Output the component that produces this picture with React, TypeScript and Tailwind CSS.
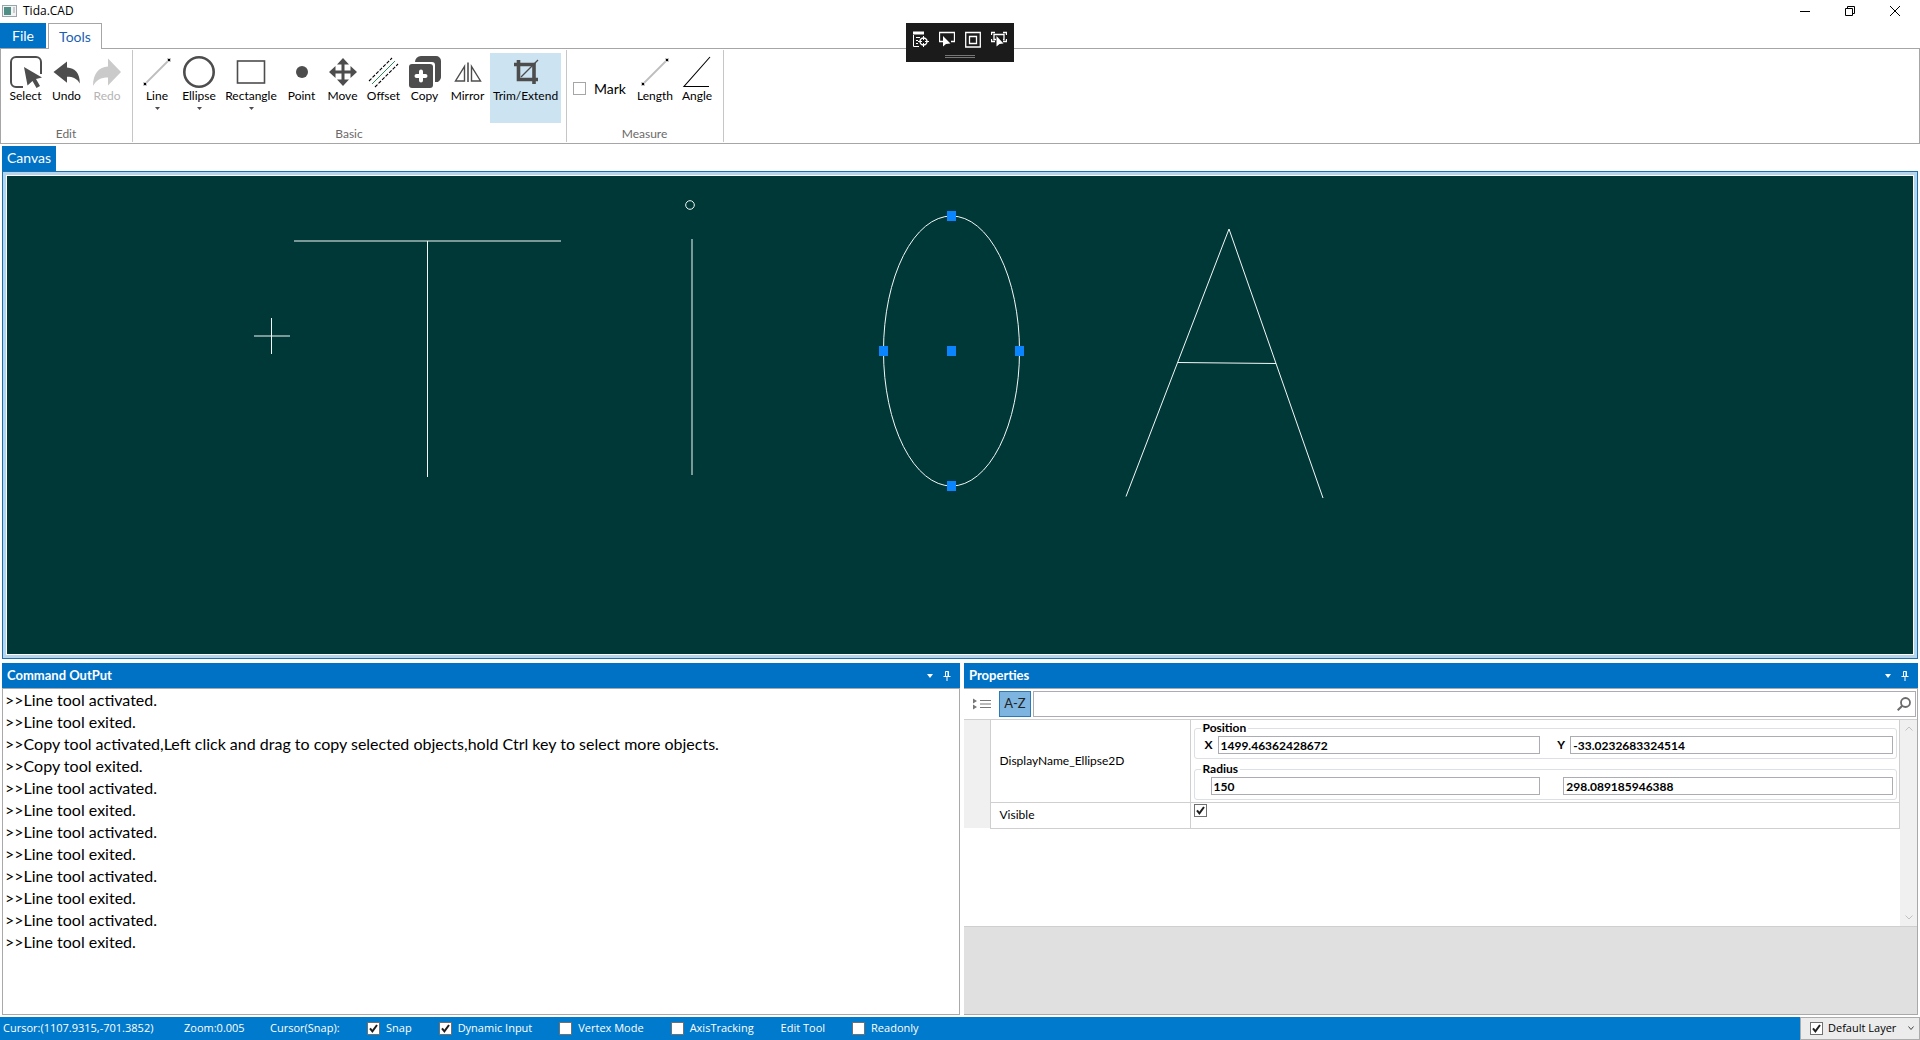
import React from "react";

function CheckBox({ id, on, look = "border-[#707070]", label }: { id: string; on?: boolean; look?: string; label?: string }) {
  return (
    <span className="relative block size-[13px] shrink-0">
      <input
        id={id}
        type="checkbox"
        defaultChecked={on}
        aria-label={label}
        className={"peer block size-[13px] appearance-none border bg-white " + look}
      />
      <svg viewBox="0 0 13 13" className="pointer-events-none absolute inset-0 hidden size-[13px] peer-checked:block">
        <path d="M3 6.3 L5.4 9.4 L10 3" fill="none" stroke="#1e1e1e" strokeWidth="2" />
      </svg>
    </span>
  );
}

const LineIcon = () => (
  <svg width="32" height="32" viewBox="0 0 32 32">
    <path d="M4 28 28 4" stroke="#bdbdbd" strokeWidth="1.8" />
    <path d="M2 26h4v4H2zM26 2h4v4h-4z" fill="#c9c9c9" />
    <path d="M3 27h2v2H3zM27 3h2v2h-2z" fill="#000" />
  </svg>
);

const icons: Record<string, React.ReactNode> = {
  Select: (
    <svg width="32" height="32" viewBox="0 0 32 32">
      <path d="M13 31H6a5 5 0 0 1-5-5V6a5 5 0 0 1 5-5h20a5 5 0 0 1 5 5v12" fill="none" stroke="#4d4d4d" strokeWidth="2" />
      <path d="M14 11 32 21.500 26 23 30 30 26.500 32 22.500 25 17.500 29.500z" fill="#4d4d4d" />
    </svg>
  ),
  Undo: (
    <svg width="32" height="32" viewBox="0 0 32 32">
      <path d="M2.500 16 16 5.500v6C24 12 29 17 28.800 27.500 26 22.500 22 20.800 16 20.800v6z" fill="#4d4d4d" />
    </svg>
  ),
  Redo: (
    <svg width="32" height="32" viewBox="0 0 32 32">
      <path d="M30 16 17 2.500v8C8 11 2 17.500 2 30 5 24 10 21.500 17 21.500v8z" fill="#cacaca" />
    </svg>
  ),
  Line: <LineIcon />,
  Length: <LineIcon />,
  Ellipse: (
    <svg width="32" height="32" viewBox="0 0 32 32">
      <circle cx="16" cy="16" r="14.700" fill="none" stroke="#4d4d4d" strokeWidth="2.600" />
    </svg>
  ),
  Rectangle: (
    <svg width="32" height="32" viewBox="0 0 32 32">
      <rect x="2.500" y="5" width="27" height="22" fill="none" stroke="#4d4d4d" strokeWidth="1.600" />
    </svg>
  ),
  Point: (
    <svg width="32" height="32" viewBox="0 0 32 32">
      <circle cx="16" cy="16" r="6" fill="#4d4d4d" />
    </svg>
  ),
  Move: (
    <svg width="32" height="32" viewBox="0 0 32 32">
      <path
        d="M16 2l6 6.500h-4.500v6h6V10L30 16l-6.500 6v-4.500h-6v6H22L16 30l-6-6.500h4.500v-6h-6V22L2 16l6.500-6v4.500h6v-6H10z"
        fill="#4d4d4d"
      />
    </svg>
  ),
  Offset: (
    <svg width="32" height="32" viewBox="0 0 32 32" fill="none">
      <path d="M1 25 24 2M7 31 30 8" stroke="#000" strokeWidth="1.100" strokeDasharray="3.500 1.500" />
      <path d="M4 28 27 5" stroke="#2f8f5b" strokeWidth="1" />
    </svg>
  ),
  Copy: (
    <svg width="32" height="32" viewBox="0 0 32 32">
      <path d="M6 6a6 6 0 0 1 6-6h15a5 5 0 0 1 5 5v16a5 5 0 0 1-6 5V9a3 3 0 0 0-3-3z" fill="#4d4d4d" />
      <rect x="0" y="8" width="24" height="24" rx="3" fill="#4d4d4d" />
      <path d="M12 15.500v9M7.500 20h9" stroke="#fff" strokeWidth="4" strokeLinecap="round" />
    </svg>
  ),
  Mirror: (
    <svg width="32" height="32" viewBox="0 0 32 32" fill="none" stroke="#4d4d4d">
      <path d="M16 6.500V26" strokeWidth="1.600" />
      <path d="M12.500 10.500V25H3.500zM19.500 10.500V25h9z" strokeWidth="1.400" />
    </svg>
  ),
  "Trim/Extend": (
    <svg width="32" height="32" viewBox="0 0 32 32" fill="none" stroke="#4d4d4d">
      <path d="M4 8.500h20V28M8.500 4v19.500H28" strokeWidth="3.600" />
      <path d="M11 21 28 4" strokeWidth="1.200" />
    </svg>
  ),
  Angle: (
    <svg width="32" height="32" viewBox="0 0 32 32" fill="none" stroke="#000" strokeWidth="1.100">
      <path d="M29 1 3 30.500H28" />
    </svg>
  ),
};

function Tool({ name, width, arrow, disabled, active }: { name: string; width: string; arrow?: boolean; disabled?: boolean; active?: boolean }) {
  return (
    <button
      disabled={disabled}
      className={
        "flex h-[70px] shrink-0 flex-col items-center pt-[3px] text-[12px] leading-4 " +
        width +
        (active ? " bg-[#cce3f2]" : "") +
        (disabled ? " text-[#b4b4b4]" : " text-black")
      }
    >
      {icons[name]}
      <span>{name}</span>
      {arrow && (
        <svg width="5" height="3" viewBox="0 0 5 3" className="mt-[3px]">
          <path d="M0 0h5L2.500 3z" fill="#4d4d4d" />
        </svg>
      )}
    </button>
  );
}

function Group({ title, children }: { title: string; children: React.ReactNode }) {
  return (
    <section aria-label={title} className="flex flex-col justify-between border-r border-[#c6c6c6] pr-[5px] pl-1">
      <div className="flex">{children}</div>
      <h2 className="text-center text-[12px] leading-4 text-[#6a6a6a]">{title}</h2>
    </section>
  );
}

function PanelHeader({ title }: { title: string }) {
  return (
    <header className="flex h-[25px] shrink-0 items-center bg-[#0072c6] px-[5px] text-[13px] font-bold text-white">
      <h2 className="flex-1">{title}</h2>
      <button aria-label={title + " menu"} className="p-1">
        <svg width="6" height="4" viewBox="0 0 6 4">
          <path d="M0 0h6L3 4z" fill="#fff" />
        </svg>
      </button>
      <button aria-label={"Pin " + title} className="mr-1 ml-[6px]">
        <svg width="8" height="10" viewBox="0 0 8 10" fill="none" stroke="#fff">
          <path d="M2.500 5.500v-5h3v5M5 0.500v5M0.500 5.500h7M4 6v4" />
        </svg>
      </button>
    </header>
  );
}

const log = [
  "Line tool activated.",
  "Line tool exited.",
  "Copy tool activated,Left click and drag to copy selected objects,hold Ctrl key to select more objects.",
  "Copy tool exited.",
  "Line tool activated.",
  "Line tool exited.",
  "Line tool activated.",
  "Line tool exited.",
  "Line tool activated.",
  "Line tool exited.",
  "Line tool activated.",
  "Line tool exited.",
];

function Drawing() {
  return (
    <svg className="absolute inset-0 size-full" fill="none" stroke="#f4f8f8" strokeWidth="1" role="img" aria-label="Drawing canvas">
      <path d="M287 65H554M420.500 65V301M685 63V299" />
      <circle cx="683" cy="29" r="4.300" />
      <ellipse cx="944.500" cy="175" rx="68" ry="135" />
      <path d="M1119 320.500 1222 53 1316 322M1171 186.500 1269 187.500" />
      <path d="M247 160h36M264.500 142v36" />
      <path
        fill="#0a84ff"
        stroke="none"
        d="M940 35h9v10h-9zM940 170h9v10h-9zM940 305h9v10h-9zM872 170h9v10h-9zM1008 170h9v10h-9z"
      />
    </svg>
  );
}

function FieldBox({ legend, fields }: { legend: string; fields: { label: string; name: string; value: string }[] }) {
  return (
    <fieldset className="mr-[2px] ml-[3px] min-w-0 rounded-[3px] border border-[#dcdfe3] pr-[3px] pb-1 pl-[5px] leading-none">
      <legend className="ml-[1px] px-[2px] text-[12px] leading-4">{legend}</legend>
      <div className="grid grid-cols-2 gap-x-3">
        {fields.map((f) => (
          <div key={f.name} className="flex items-center">
            {f.label && (
              <label htmlFor={f.name} className="w-[18px] pl-[5px] text-[12px]">
                {f.label}
              </label>
            )}
            <input
              id={f.name}
              aria-label={f.name}
              defaultValue={f.value}
              className={"h-[18px] w-full min-w-0 flex-1 border border-[#abadb3] bg-white px-[2px] text-[12px] " + (f.label ? "" : "ml-[11px]")}
            />
          </div>
        ))}
      </div>
    </fieldset>
  );
}

function Properties() {
  return (
    <section className="flex min-w-0 flex-[954] basis-0 flex-col">
      <PanelHeader title="Properties" />
      <div className="flex min-h-0 flex-1 flex-col border-t border-r border-b border-[#a9a9a9] bg-[#e0e0e0]">
        <div className="flex items-center border-b border-[#cfcfcf] bg-white py-[2px] pr-px">
          <button aria-label="Group by category" className="mr-[8px] ml-[9px]">
            <svg width="18" height="12" viewBox="0 0 18 12">
              <path d="M0 0.500 4 3 0 5.500zM0 6.500 4 9 0 11.500z" fill="#777" />
              <path d="M7 2.500h11M7 6h11M7 9.500h11" stroke="#777" strokeWidth="1.200" />
            </svg>
          </button>
          <button className="h-[26px] w-8 border border-[#2a7ab8] bg-[#7db4e0] text-[13px] text-[#222]">A-Z</button>
          <div className="ml-[2px] flex h-[26px] flex-1 items-center border border-[#abadb3]">
            <input aria-label="Search properties" className="h-full min-w-0 flex-1 px-1 text-[13px] outline-none" />
            <svg width="14" height="14" viewBox="0 0 14 14" fill="none" stroke="#6b6b6b" className="mr-1">
              <circle cx="8.500" cy="5.500" r="4.500" strokeWidth="1.800" />
              <path d="M5.300 8.700 0.700 13.300" strokeWidth="2" />
            </svg>
          </div>
        </div>
        <div className="flex h-[207px] border-b border-[#cfcfcf] bg-white">
          <div className="min-w-0 flex-1">
            <table className="w-full table-fixed border-collapse text-[12px]">
              <colgroup>
                <col className="w-[26px]" />
                <col className="w-[200px]" />
                <col />
              </colgroup>
              <tbody>
                <tr className="h-[82px]">
                  <td className="bg-[#f0f0f0]" />
                  <th className="border-r border-b border-l border-[#cfcfcf] pl-[9px] text-left font-normal">DisplayName_Ellipse2D</th>
                  <td className="border-r border-b border-[#cfcfcf] p-0 align-top font-bold">
                    <div className="flex flex-col gap-[2px]">
                      <FieldBox
                        legend="Position"
                        fields={[
                          { label: "X", name: "position-x", value: "1499.46362428672" },
                          { label: "Y", name: "position-y", value: "-33.0232683324514" },
                        ]}
                      />
                      <FieldBox
                        legend="Radius"
                        fields={[
                          { label: "", name: "radius-x", value: "150" },
                          { label: "", name: "radius-y", value: "298.089185946388" },
                        ]}
                      />
                    </div>
                  </td>
                </tr>
                <tr className="h-[26px]">
                  <td className="bg-[#f0f0f0]" />
                  <th className="border-r border-b border-l border-[#cfcfcf] pl-[9px] text-left font-normal">
                    <label htmlFor="visible">Visible</label>
                  </th>
                  <td className="border-r border-b border-[#cfcfcf] px-[3px] pt-px align-top">
                    <CheckBox id="visible" on />
                  </td>
                </tr>
              </tbody>
            </table>
          </div>
          <div className="flex w-[17px] flex-col items-center justify-between bg-[#f0f0f0] py-[6px]">
            <svg width="8" height="5" viewBox="0 0 8 5" fill="none" stroke="#c2c2c2">
              <path d="M0.500 4.500 4 1l3.500 3.500" />
            </svg>
            <svg width="8" height="5" viewBox="0 0 8 5" fill="none" stroke="#c2c2c2">
              <path d="M0.500 0.500 4 4 7.500 0.500" />
            </svg>
          </div>
        </div>
      </div>
    </section>
  );
}

function StatusCheck({ id, text, on }: { id: string; text: string; on?: boolean }) {
  return (
    <div className="flex items-center gap-[6px]">
      <CheckBox id={id} on={on} />
      <label htmlFor={id}>{text}</label>
    </div>
  );
}

export default function App() {
  return (
    <div className="flex h-screen flex-col bg-white font-['Lato','Liberation_Sans',sans-serif] text-black">
      <header className="relative flex h-[23px] shrink-0 items-center pb-[2px] pl-[2px]">
        <svg width="15" height="12" viewBox="0 0 15 12">
          <rect x="0.500" y="0.500" width="14" height="11" fill="#f3f3f3" stroke="#9aa5ab" />
          <rect x="2" y="2" width="7" height="8" fill="#4f8f86" />
          <path d="M11 3h2M11 5h2M11 7h2" stroke="#9aa5ab" />
        </svg>
        <h1 className="ml-[6px] flex-1 font-['Open_Sans','Noto_Sans',sans-serif] text-[12px]">Tida.CAD</h1>
        <div className="flex items-center gap-[35px] pr-5">
          <button aria-label="Minimize">
            <svg width="10" height="10" viewBox="0 0 10 10" stroke="#000">
              <path d="M0 5.500h10" />
            </svg>
          </button>
          <button aria-label="Restore">
            <svg width="10" height="10" viewBox="0 0 10 10" fill="none" stroke="#000">
              <path d="M0.500 2.500h7v7h-7zM2.500 2.500v-2h7v7h-2" />
            </svg>
          </button>
          <button aria-label="Close">
            <svg width="10" height="10" viewBox="0 0 10 10" stroke="#000">
              <path d="M0 0 10 10M10 0 0 10" />
            </svg>
          </button>
        </div>
        <div className="absolute top-[23px] left-[906px] z-10 flex h-[39px] w-[108px] flex-col items-center bg-[#1b1b1b] pt-[8px]">
          <div className="flex gap-[10px]">
            <button aria-label="Live tree">
              <svg width="16" height="17" viewBox="0 0 16 17" fill="none" stroke="#fff">
                <path d="M0.500 4v11.500H6M3 6.500h4M3 9.500h2M3 12.500h2" />
                <path d="M0 2h11" strokeWidth="3" />
                <circle cx="10.500" cy="10.500" r="3.500" strokeWidth="1.400" />
                <path d="M10.500 5v4M10.500 12v4M5 10.500h4M12 10.500h4" />
              </svg>
            </button>
            <button aria-label="Select element">
              <svg width="16" height="17" viewBox="0 0 16 17" fill="none" stroke="#fff">
                <path d="M4 10.500H0.500v-9h15v9H12" strokeWidth="1.300" />
                <path d="M4 5v10.500l3-2.500 4.500-.5z" fill="#fff" stroke="none" />
              </svg>
            </button>
            <button aria-label="Layout guides">
              <svg width="16" height="17" viewBox="0 0 16 17" fill="none" stroke="#fff">
                <path d="M0.700 1.500h14.600v14.500H0.700zM4.500 5.500h7v7h-7z" strokeWidth="1.300" />
              </svg>
            </button>
            <button aria-label="Track focus">
              <svg width="16" height="17" viewBox="0 0 16 17" fill="none" stroke="#fff">
                <path d="M0.500 4V1.500H4M12 1.500h3.500V4M0.500 8v2.500H4M12 10.500h3.500V8M5 8.500H3v-5h10v5h-1" strokeWidth="1.300" />
                <path d="M5.500 5v10.500l3-2.500 4-.5z" fill="#fff" stroke="none" />
              </svg>
            </button>
          </div>
          <div className="mt-[7px] h-[3px] w-[30px] border-y border-[#777]" />
        </div>
      </header>

      <nav className="flex shrink-0 gap-[2px] text-[14px]">
        <button className="h-[25px] w-[46px] bg-[#0072c6] text-white">File</button>
        <button className="relative z-[1] -mb-px h-[26px] w-[54px] border border-b-0 border-[#a6a6a6] bg-white text-[#1a5fb4]">Tools</button>
      </nav>

      <div className="flex h-24 shrink-0 border border-[#a6a6a6] py-px">
        <Group title="Edit">
          <div className="flex pt-[3px]">
            <Tool name="Select" width="w-[41px]" />
            <Tool name="Undo" width="w-[41px]" />
            <Tool name="Redo" width="w-[40px]" disabled />
          </div>
        </Group>
        <Group title="Basic">
          <div className="flex pt-[3px]">
            <Tool name="Line" width="w-[40px]" arrow />
            <Tool name="Ellipse" width="w-[44px]" arrow />
            <Tool name="Rectangle" width="w-[60px]" arrow />
            <Tool name="Point" width="w-[41px]" />
            <Tool name="Move" width="w-[41px]" />
            <Tool name="Offset" width="w-[41px]" />
            <Tool name="Copy" width="w-[41px]" />
            <Tool name="Mirror" width="w-[45px]" />
            <Tool name="Trim/Extend" width="w-[71px]" active />
          </div>
        </Group>
        <Group title="Measure">
          <div className="flex pt-[3px]">
            <div className="mt-[27px] flex h-4 w-[63px] items-center gap-2 pl-[2px] text-[14px]">
              <CheckBox id="mark" look="border-[#a6a6a6]" />
              <label htmlFor="mark">Mark</label>
            </div>
            <Tool name="Length" width="w-[42px]" />
            <Tool name="Angle" width="w-[42px]" />
          </div>
        </Group>
      </div>

      <main className="flex min-h-0 flex-1 flex-col px-[2px] pt-[2px]">
        <div className="flex min-h-0 flex-[513] basis-0 flex-col">
          <button className="h-[25px] w-[54px] shrink-0 bg-[#0072c6] pb-[2px] text-[14px] text-white">Canvas</button>
          <div className="flex min-h-0 flex-1 border border-[#1e6fae] bg-[#b5d5ec] p-[3px]">
            <div className="relative flex-1 border border-white bg-[#003838]">
              <Drawing />
            </div>
          </div>
        </div>

        <div className="mt-1 flex min-h-0 flex-[352] basis-0 gap-1">
          <section className="flex min-w-0 flex-[958] basis-0 flex-col">
            <PanelHeader title="Command OutPut" />
            <div className="flex-1 overflow-hidden border border-[#a9a9a9] bg-white pl-[2px] text-[16px] leading-[22px]">
              {log.map((line, i) => (
                <p key={i}>{">>" + line}</p>
              ))}
            </div>
          </section>
          <Properties />
        </div>
      </main>

      <footer className="mt-[2px] flex h-[23px] shrink-0 items-center bg-[#007acc] pl-[3px] font-['Open_Sans','Noto_Sans',sans-serif] text-[11px] text-white">
        <span className="w-[181px]">Cursor:(1107.9315,-701.3852)</span>
        <span className="w-[86px]">Zoom:0.005</span>
        <span className="w-[97px]">Cursor(Snap):</span>
        <div className="flex items-center gap-[27px]">
          <StatusCheck id="snap" text="Snap" on />
          <StatusCheck id="dynamic" text="Dynamic Input" on />
          <StatusCheck id="vertex" text="Vertex Mode" />
          <StatusCheck id="axis" text="AxisTracking" />
          <span>Edit Tool</span>
          <StatusCheck id="readonly" text="Readonly" />
        </div>
        <div className="ml-auto flex h-full w-[120px] items-center gap-[5px] border border-[#acacac] bg-[#ececec] pl-[9px] text-black">
          <CheckBox id="layer" on />
          <label htmlFor="layer" className="flex-1 whitespace-nowrap">Default Layer</label>
          <button aria-label="Choose layer" className="pr-[5px]">
            <svg width="6" height="5" viewBox="0 0 6 5" fill="none" stroke="#444">
              <path d="M0.500 0.500 3 3.500 5.500 0.500" />
            </svg>
          </button>
        </div>
      </footer>
    </div>
  );
}
